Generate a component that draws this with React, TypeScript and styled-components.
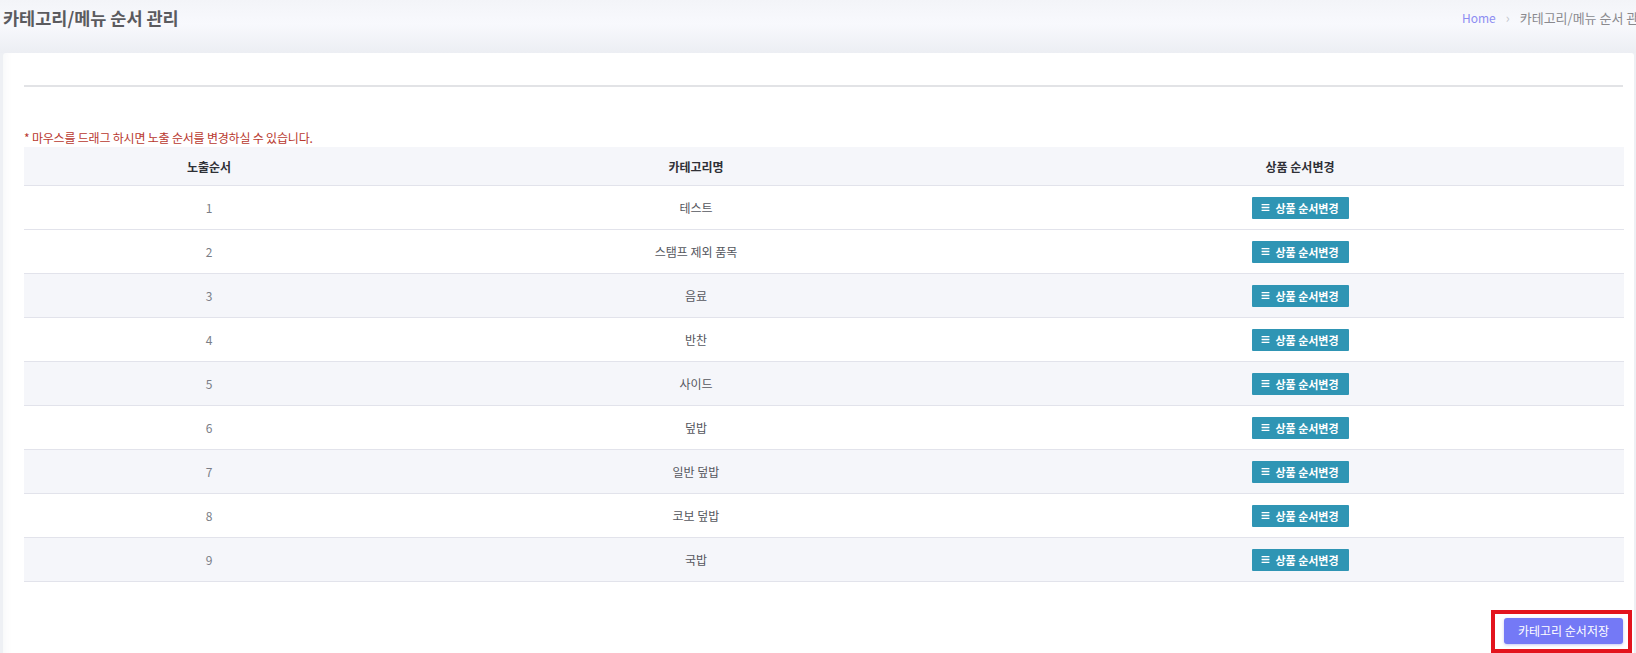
import * as React from 'react';
import styled, { createGlobalStyle } from 'styled-components';
import { FaBars } from 'react-icons/fa';

const GlobalStyle = createGlobalStyle`
  html, body {
    margin: 0;
    padding: 0;
    background: #eef0f4;
    overflow: hidden;
  }

  body {
    font-family: 'Noto Sans CJK KR', 'Noto Sans', sans-serif;
  }
`;

const Page = styled.div`
  width: 1636px;
  height: 653px;
  display: flex;
  flex-direction: column;
`;

const PageHeader = styled.header`
  height: 53px;
  flex-shrink: 0;
  display: flex;
  align-items: flex-start;
  justify-content: space-between;
  padding: 5px 0 0 3px;
  box-sizing: border-box;
  background: linear-gradient(180deg, #f3f4f8 0%, #f8f9fd 45%, #eceef3 100%);
`;

const Title = styled.h1`
  margin: 0;
  font-size: 17.5px;
  font-weight: 700;
  color: #5b5b5f;
  line-height: 26px;
`;

const Breadcrumb = styled.nav`
  display: flex;
  align-items: center;
  gap: 10px;
  margin-top: 3px;
  font-size: 12px;
  line-height: 20px;
  white-space: nowrap;
  overflow: hidden;
  width: 174px;
`;

const Crumb = styled.span<{ $active?: boolean }>`
  color: ${({ $active }) => ($active ? '#8d8df2' : '#8a8a8f')};
  font-size: ${({ $active }) => ($active ? '12px' : '13px')};
`;

const Chevron = styled.span`
  color: #c4c6cc;
  font-size: 13px;
`;

const Card = styled.section`
  flex: 1;
  margin-left: 3px;
  width: 1631px;
  background: #fff;
  border-radius: 3px 3px 0 0;
  box-shadow: inset 10px 0 8px -8px rgba(30, 40, 80, 0.04);
  padding: 32px 10px 0 21px;
  box-sizing: border-box;
`;

const Divider = styled.hr`
  margin: 0 1px 0 0;
  border: 0;
  border-top: 2px solid #e2e3e6;
`;

const Notice = styled.p`
  margin: 43px 0 0;
  font-size: 12px;
  line-height: 15px;
  color: #b8382e;
  letter-spacing: -0.2px;
`;

const Table = styled.table`
  width: 1600px;
  border-collapse: collapse;
  table-layout: fixed;
  margin-top: 2px;
`;

const HeadCell = styled.th<{ $trim?: number }>`
  height: 38px;
  padding: 0 ${({ $trim }) => $trim ?? 0}px 0 0;
  background: #f5f6fa;
  border-bottom: 1px solid #e2e3eb;
  font-size: 12px;
  font-weight: 700;
  color: #2f3036;
  text-align: center;
`;

const Row = styled.tr<{ $striped: boolean }>`
  background: ${({ $striped }) => ($striped ? '#f5f6fa' : '#fff')};
`;

const Cell = styled.td<{ $trim?: number; $muted?: boolean }>`
  height: 43px;
  padding: 0 ${({ $trim }) => $trim ?? 0}px 0 0;
  border-bottom: 1px solid #e2e3eb;
  font-size: 12px;
  color: ${({ $muted }) => ($muted ? '#7a7d86' : '#55575e')};
  text-align: center;
  vertical-align: middle;
`;

const SortButton = styled.button`
  display: inline-flex;
  align-items: center;
  justify-content: center;
  gap: 5px;
  width: 97px;
  height: 22px;
  padding: 0;
  border: 0;
  border-radius: 1px;
  background: #2f95b4;
  color: #fff;
  font-family: inherit;
  font-size: 11px;
  font-weight: 700;
  cursor: pointer;

  svg {
    width: 9px;
    height: 9px;
  }
`;

const Footer = styled.div`
  display: flex;
  justify-content: flex-end;
  margin: 28px -8px 0 0;
`;

const Highlight = styled.div`
  border: 4px solid #e3141d;
  padding: 3px 5px 5px 9px;
`;

const SaveButton = styled.button`
  width: 119px;
  height: 26px;
  padding: 0;
  border: 0;
  border-radius: 3px;
  background: #7479f6;
  box-shadow: 0 1px 3px rgba(90, 96, 220, 0.35);
  color: #fff;
  font-family: inherit;
  font-size: 12px;
  cursor: pointer;
`;

const categories = ['테스트', '스탬프 제외 품목', '음료', '반찬', '사이드', '덮밥', '일반 덮밥', '코보 덮밥', '국밥'];

const App = () => (
  <>
    <GlobalStyle />
    <Page>
      <PageHeader>
        <Title>카테고리/메뉴 순서 관리</Title>
        <Breadcrumb>
          <Crumb $active>Home</Crumb>
          <Chevron>›</Chevron>
          <Crumb>카테고리/메뉴 순서 관리</Crumb>
        </Breadcrumb>
      </PageHeader>

      <Card>
        <Divider />
        <Notice>* 마우스를 드래그 하시면 노출 순서를 변경하실 수 있습니다.</Notice>
        <Table>
          <colgroup>
            <col style={{ width: 370 }} />
            <col style={{ width: 604 }} />
            <col />
          </colgroup>
          <thead>
            <tr>
              <HeadCell>노출순서</HeadCell>
              <HeadCell>카테고리명</HeadCell>
              <HeadCell $trim={22}>상품 순서변경</HeadCell>
            </tr>
          </thead>
          <tbody>
            {categories.map((name, i) => (
              <Row key={name} $striped={i > 0 && i % 2 === 0}>
                <Cell $muted>{i + 1}</Cell>
                <Cell>{name}</Cell>
                <Cell $trim={22}>
                  <SortButton type="button">
                    <FaBars /> 상품 순서변경
                  </SortButton>
                </Cell>
              </Row>
            ))}
          </tbody>
        </Table>
        <Footer>
          <Highlight>
            <SaveButton type="button">카테고리 순서저장</SaveButton>
          </Highlight>
        </Footer>
      </Card>
    </Page>
  </>
);

export default App;
